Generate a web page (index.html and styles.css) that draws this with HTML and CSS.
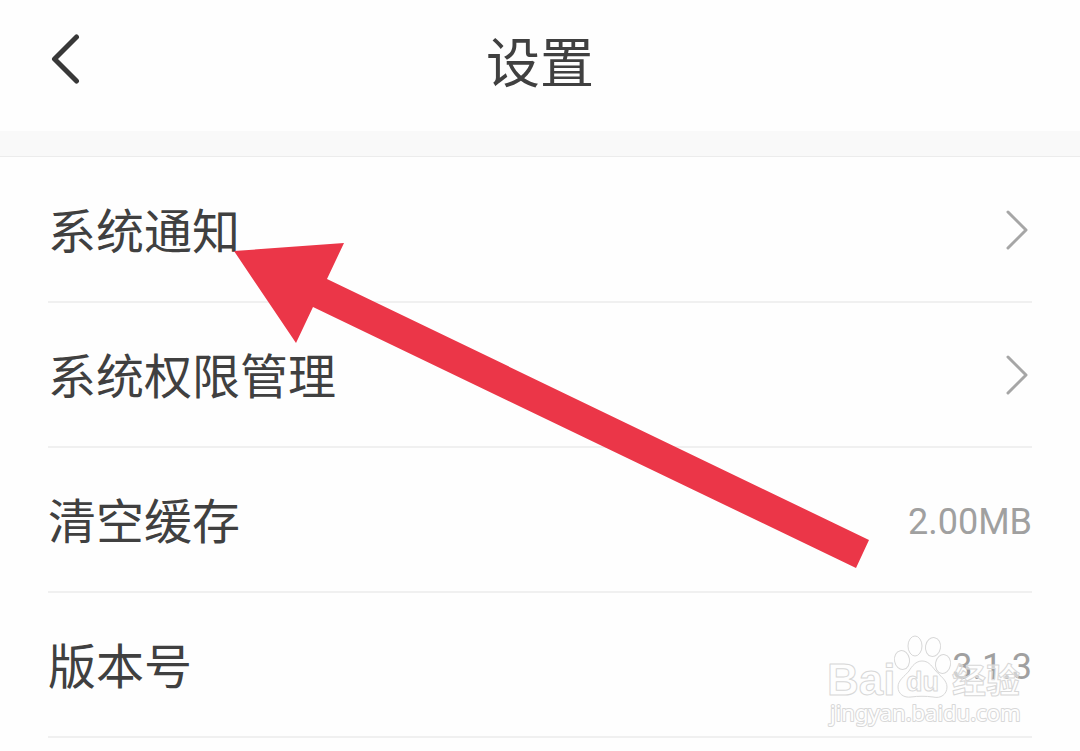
FILE: index.html
```html
<!DOCTYPE html>
<html lang="zh-CN">
<head>
    <meta charset="utf-8">
    <meta name="viewport" content="width=device-width, initial-scale=1">
    <title>设置</title>
    <link rel="stylesheet" href="styles.css">
</head>
<body>
    <header class="header">
        <button class="back-button" type="button" aria-label="返回">
            <svg width="32" height="52" viewBox="0 0 32 52"><path d="M28.500 4L6.500 26L28.500 48"/></svg>
        </button>
        <h1 class="title">设置</h1>
    </header>
    <main class="settings">
        <ul class="settings-list">
            <li class="settings-item">
                <a class="settings-row" href="#notifications">
                    <span class="label">系统通知</span>
                    <svg class="chevron" width="28" height="44" viewBox="0 0 28 44"><path d="M4 4L22 22L4 40"/></svg>
                </a>
            </li>
            <li class="settings-item">
                <a class="settings-row" href="#permissions">
                    <span class="label">系统权限管理</span>
                    <svg class="chevron" width="28" height="44" viewBox="0 0 28 44"><path d="M4 4L22 22L4 40"/></svg>
                </a>
            </li>
            <li class="settings-item">
                <a class="settings-row" href="#cache">
                    <span class="label">清空缓存</span>
                    <span class="value">2.00MB</span>
                </a>
            </li>
            <li class="settings-item">
                <div class="settings-row">
                    <span class="label">版本号</span>
                    <span class="value">3.1.3</span>
                </div>
            </li>
        </ul>

        <!-- arrow pointing at the first row -->
        <svg class="arrow" width="636" height="326" viewBox="0 0 636 326" aria-hidden="true">
            <path d="M0 9L110 1L93 37L635 298L622 326L79 65L62 101Z"/>
        </svg>

        <svg class="watermark" width="200" height="96" viewBox="0 0 200 96">
            <text class="brand" x="1" y="61">Bai</text>
            <g class="paw">
                <ellipse cx="76" cy="26" rx="7.500" ry="9.500" transform="rotate(-10 76 26)"/>
                <ellipse cx="89" cy="12" rx="7" ry="10"/>
                <ellipse cx="107" cy="13" rx="7.500" ry="9.500" transform="rotate(10 107 13)"/>
                <ellipse cx="117" cy="30" rx="7.500" ry="9.500" transform="rotate(10 117 30)"/>
                <path d="M96 27C90 27 86 32 83 37C79 42 72 46 72 53C72 60 78 64 85 63C92 62 100 62 107 63C115 65 121 60 121 53C121 46 114 42 109 36C105 31 102 27 96 27Z"/>
            </g>
            <text class="brand-du" x="80" y="57">du</text>
            <text class="brand-cn" x="126" y="59">经验</text>
            <text class="site" x="4" y="87">jingyan.baidu.com</text>
        </svg>
    </main>
</body>
</html>
```
FILE: styles.css
```css
* {
    box-sizing: border-box;
}

body {
    margin: 0;
    background-color: #fefefe;
    color: #404040;
    font-family: Roboto, "Noto Sans CJK SC", sans-serif;
}

.header {
    position: relative;
    display: flex;
    align-items: center;
    justify-content: center;
    height: 131px;
    padding-bottom: 2px;
}

.back-button {
    position: absolute;
    left: 48px;
    top: 33px;
    height: 52px;
    padding: 0;
    border: none;
    background: none;
    cursor: pointer;
}

.back-button svg {
    display: block;
    fill: none;
    stroke: #383838;
    stroke-width: 5;
    stroke-linecap: round;
    stroke-linejoin: round;
}

.title {
    margin: 0;
    font-size: 54px;
    font-weight: 400;
    line-height: 80px;
}

.settings {
    position: relative;
    padding-top: 2px;
    border-top: 25px solid #f9f9f9;
    box-shadow: inset 0 1px #ececec;
}

.settings-list {
    margin: 0;
    padding: 0 48px;
    list-style: none;
}

.settings-item {
    border-bottom: 2px solid #f0f0f0;
}

.settings-row {
    display: flex;
    align-items: center;
    justify-content: space-between;
    height: 143px;
    color: inherit;
    font-size: 48px;
    line-height: 72px;
    text-decoration: none;
}

.label {
    padding-top: 6px;
}

.value {
    padding-top: 4px;
    color: #a0a0a0;
    font-size: 36px;
}

.chevron {
    fill: none;
    stroke: #a6a6a6;
    stroke-width: 3;
    stroke-linecap: round;
    stroke-linejoin: round;
}

.arrow {
    position: absolute;
    left: 234px;
    top: 86px;
    fill: #eb3648;
    pointer-events: none;
}

.watermark {
    position: absolute;
    right: 54px;
    bottom: 8px;
    overflow: visible;
    fill: #fefefe;
    stroke: #d8d8d8;
    stroke-width: 1;
    stroke-linejoin: round;
    pointer-events: none;
}

.brand {
    font: bold 44px "Liberation Sans", sans-serif;
}

.brand-du {
    font: bold 27px "Liberation Sans", sans-serif;
}

.brand-cn {
    font: bold 34px "Noto Sans CJK SC", sans-serif;
    fill-opacity: 0.5;
}

.site {
    font: 22px "Noto Sans", sans-serif;
    stroke-width: 2;
    paint-order: stroke;
}
```
